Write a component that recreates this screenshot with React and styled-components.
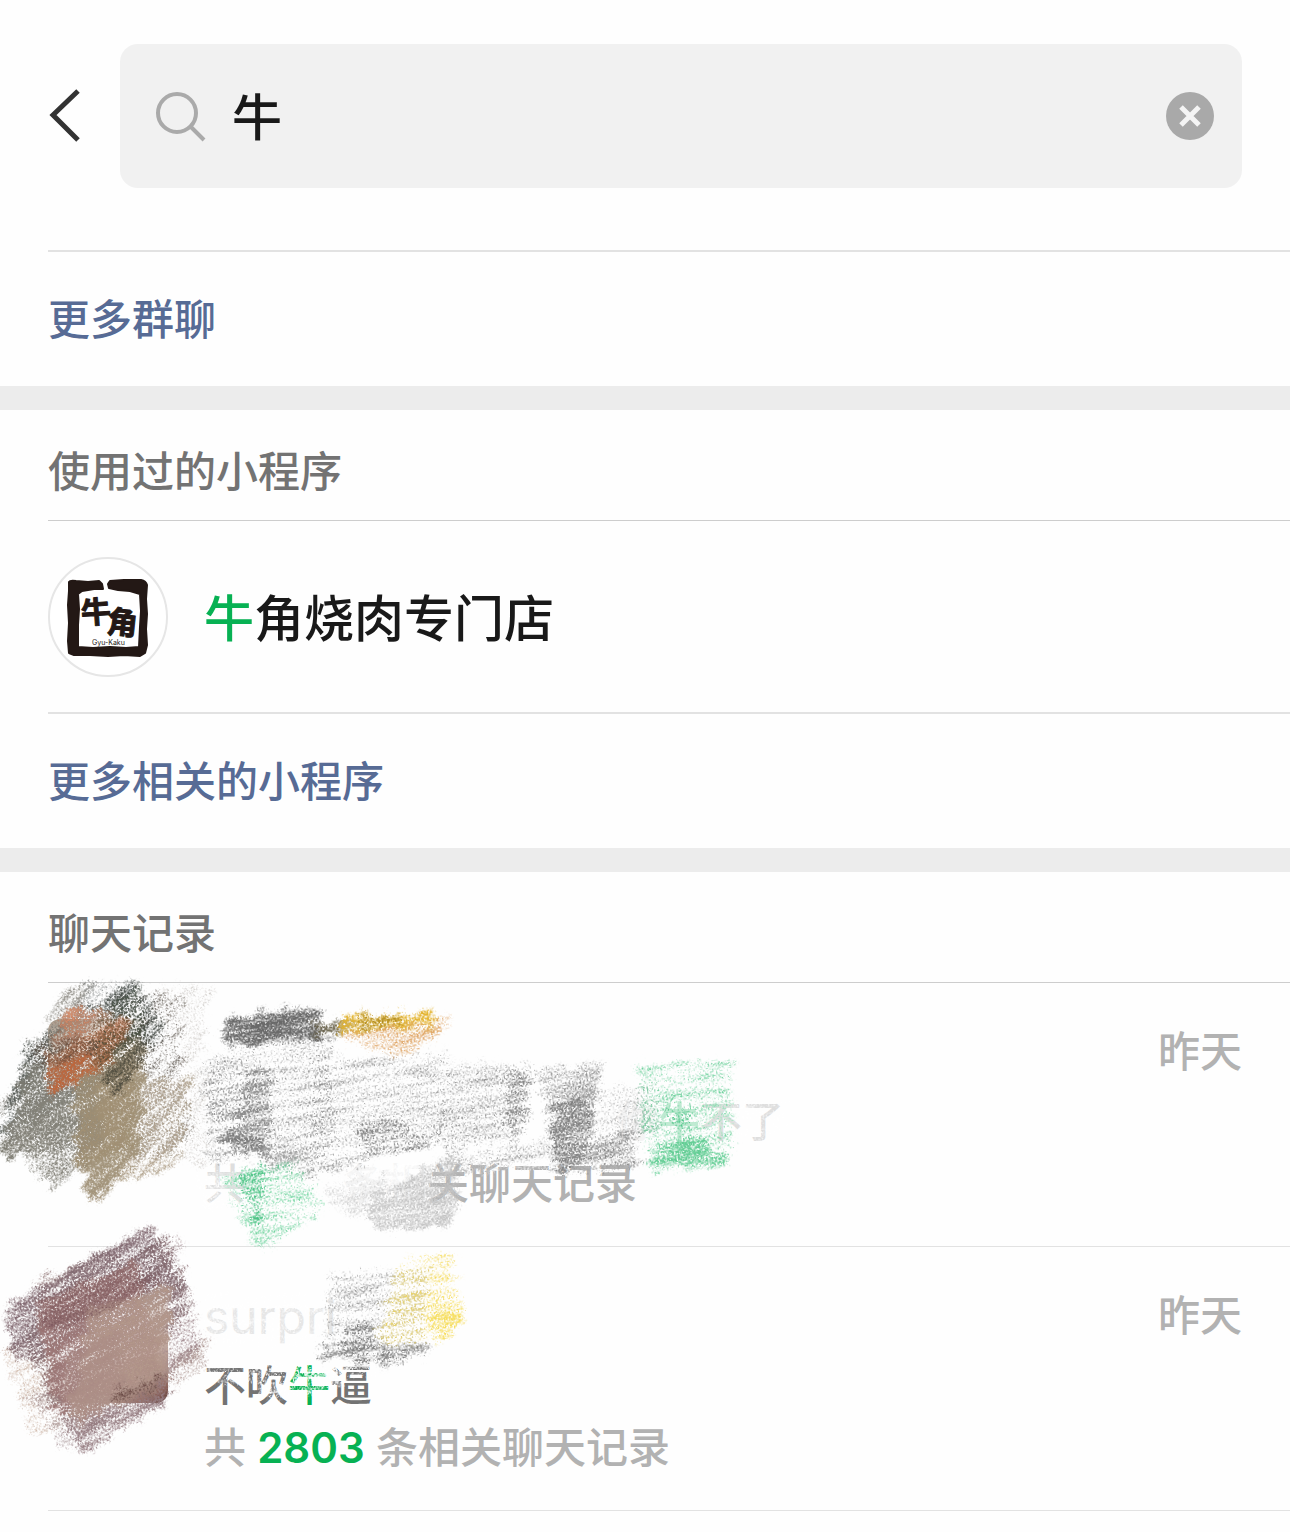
import React from "react"
import styled, { createGlobalStyle } from "styled-components"

const colors = {
  text: "#191919",
  green: "#07b153",
  link: "#576b95",
  label: "#737373",
  muted: "#b2b2b2",
  line: "#e2e2e2",
  darkLine: "#cdcdcd",
  band: "#ececec",
}

const GlobalStyle = createGlobalStyle`
  * {
    box-sizing: border-box;
  }
  body {
    margin: 0;
    background: #fefefe;
    color: ${colors.text};
    font-family: Inter, "Noto Sans CJK SC", sans-serif;
    font-weight: 500;
  }
  button, input {
    font: inherit;
    color: inherit;
    border: 0;
    padding: 0;
    background: none;
  }
`

const Page = styled.div`
  min-height: 100vh;
  overflow: hidden;
`

const Header = styled.header`
  display: flex;
  align-items: center;
  padding: 44px 48px 62px;
`

const BackButton = styled.button`
  display: flex;
  width: 72px;
  svg {
    display: block;
  }
`

const SearchBox = styled.form`
  display: flex;
  align-items: center;
  flex: 1;
  height: 144px;
  padding: 0 28px 0 34px;
  border-radius: 18px;
  background: #f1f1f1;
`

const SearchInput = styled.input`
  flex: 1;
  min-width: 0;
  margin-left: 24px;
  height: 72px;
  padding-bottom: 4px;
  font-size: 50px;
  outline: none;
`

const ClearButton = styled.button`
  display: flex;
`

const Band = styled.div`
  height: 24px;
  background: ${colors.band};
`

const Title = styled.h2`
  margin: 0;
  padding: 31px 48px 17px;
  font-size: 42px;
  line-height: 62px;
  font-weight: 500;
  color: ${colors.label};
`

const Row = styled.div`
  display: flex;
  gap: 36px;
  margin-left: 48px;
  padding: ${p => (p.$chat ? "32px 48px 31px 0" : "36px 48px 35px 0")};
  border-top: 1px solid ${p => (p.$dark ? colors.darkLine : colors.line)};
`

const More = styled.div`
  margin-left: 48px;
  padding: 37px 0 35px;
  border-top: 2px solid ${colors.line};
  a {
    display: block;
    font-size: 42px;
    line-height: 62px;
    color: ${colors.link};
    text-decoration: none;
  }
`

const Logo = styled.div`
  width: 120px;
  height: 120px;
  border: 2px solid #e6e6e6;
  border-radius: 50%;
  background: #fff;
  svg {
    display: block;
    margin: -2px;
  }
`

const AppName = styled.div`
  height: 120px;
  font-size: 50px;
  line-height: 124px;
`

const Mark = styled.span`
  color: ${colors.green};
  font-weight: ${p => (p.$bold ? 600 : 500)};
  opacity: ${p => (p.$faint ? 0.25 : 1)};
`

const Faded = styled.span`
  color: ${p => (p.$more ? "#f4f4f4" : "#dedede")};
`

const ChatList = styled.div`
  position: relative;
`

const Avatar = styled.div`
  width: 120px;
  height: 120px;
  margin-top: 4px;
  border-radius: 12px;
  background: ${p => p.$fill};
`

const ChatText = styled.div`
  flex: 1;
  min-width: 0;
  font-size: 42px;
  line-height: 62px;
  white-space: nowrap;
`

const ChatName = styled.div`
  height: 76px;
  font-size: 48px;
  line-height: 76px;
  font-weight: 400;
  color: #e6e6e6;
`

const Preview = styled.div`
  color: ${colors.label};
`

const Count = styled.div`
  color: ${colors.muted};
`

const Gap = styled.span`
  display: inline-block;
  width: ${p => p.$width}px;
`

const Time = styled.time`
  font-size: 42px;
  line-height: 74px;
  color: ${colors.muted};
`

const Drawing = styled.svg`
  position: absolute;
  top: -22px;
  left: 0;
  pointer-events: none;
`

const LastLine = styled.div`
  margin-left: 48px;
  border-top: 1px solid ${colors.line};
`

// zigzag between two edges, each edge is [x1, y1, x2, y2]
const hatch = (a, b, n) => {
  let d = ""
  for (let i = 0; i <= n; i++) {
    const t = i / n
    const wobble = ((i * 37) % 11) - 5
    const at = e => [e[0] + (e[2] - e[0]) * t, e[1] + (e[3] - e[1]) * t]
    const [ax, ay] = at(a)
    const [bx, by] = at(b)
    d += `${i ? "L" : "M"}${ax + wobble} ${ay}L${bx - wobble} ${by}`
  }
  return d
}

// [edge a, edge b, strokes, colour, density, stroke width]
const firstAvatar = [
  [[162, 990, 165, 1150], [205, 990, 205, 1160], 12, "#c8c6c3", 0.26, 11],
  [[64, 1000, 4, 1112], [84, 984, 70, 1040], 6, "#8f8e86", 0.44, 11],
  [[90, 982, 70, 1040], [130, 990, 150, 1010], 6, "#8b9090", 0.32, 12],
  [[120, 1000, 130, 1160], [174, 1000, 186, 1145], 15, "#6f6b63", 0.32, 12],
  [[120, 1090, 100, 1180], [186, 1080, 176, 1165], 10, "#b3a48e", 0.42, 12],
  [[80, 1090, 92, 1194], [134, 1050, 136, 1150], 10, "#a3947b", 0.76, 16],
  [[32, 1050, 6, 1135], [132, 986, 160, 1035], 13, "#4f5552", 0.48, 13],
  [[35, 1070, 10, 1150], [100, 1050, 90, 1145], 12, "#7d7b72", 0.6, 15],
  [[10, 1130, 48, 1184], [60, 1090, 110, 1140], 8, "#85827a", 0.46, 12],
  [[80, 1080, 80, 1160], [130, 1040, 130, 1140], 9, "#a08f73", 0.6, 14],
  [[110, 1060, 110, 1090], [140, 1020, 145, 1060], 5, "#4d4a3e", 0.42, 12],
  [[52, 1060, 56, 1090], [126, 1018, 110, 1056], 6, "#c2663a", 0.6, 12],
  [[66, 1014, 56, 1045], [105, 1012, 115, 1028], 4, "#d98b69", 0.48, 10],
  [[95, 1030, 95, 1066], [134, 990, 142, 1036], 7, "#46503f", 0.36, 11],
  [[34, 1045, 40, 1064], [85, 1040, 90, 1050], 4, "#5e5048", 0.42, 9],
]

const messages = [
  [[210, 1062, 210, 1158], [330, 1042, 330, 1153], 18, "#8a8a8a", 0.27, 11],
  [[320, 1065, 310, 1170], [438, 1056, 438, 1140], 18, "#929292", 0.26, 11],
  [[210, 1078, 214, 1122], [250, 1072, 250, 1122], 8, "#8d8d8d", 0.3, 11],
  [[254, 1074, 236, 1138], [266, 1077, 268, 1140], 10, "#8a8a8a", 0.48, 12],
  [[226, 1137, 240, 1146], [254, 1142, 272, 1156], 4, "#7c7c7c", 0.6, 10],
  [[230, 1155, 300, 1174], [265, 1150, 370, 1162], 4, "#a0a0a0", 0.34, 9],
  [[362, 1130, 364, 1148], [390, 1120, 434, 1143], 4, "#858585", 0.4, 10],
  [[232, 1021, 230, 1044], [316, 1012, 318, 1032], 6, "#696969", 0.68, 11],
  [[315, 1024, 322, 1031], [350, 1024, 368, 1027], 3, "#6c664f", 0.58, 8],
  [[346, 1020, 350, 1030], [426, 1016, 434, 1024], 4, "#e3b431", 0.66, 10],
  [[362, 1018, 366, 1028], [395, 1018, 392, 1023], 3, "#aa8723", 0.5, 8],
  [[350, 1038, 395, 1052], [440, 1022, 424, 1044], 5, "#e0a868", 0.42, 10],
  [[450, 1070, 442, 1148], [524, 1068, 524, 1128], 13, "#8f8f8f", 0.3, 11],
  [[512, 1076, 510, 1133], [522, 1072, 524, 1128], 8, "#838383", 0.44, 12],
  [[450, 1160, 450, 1174], [540, 1144, 550, 1154], 4, "#969696", 0.32, 10],
  [[542, 1076, 554, 1143], [592, 1068, 592, 1105], 10, "#8c8c8c", 0.4, 11],
  [[558, 1109, 560, 1170], [582, 1105, 586, 1143], 9, "#7d7d7d", 0.54, 13],
  [[572, 1150, 564, 1172], [632, 1134, 632, 1164], 7, "#868686", 0.46, 11],
  [[592, 1095, 602, 1140], [648, 1087, 655, 1130], 7, "#a8a8a8", 0.24, 10],
  [[643, 1069, 652, 1158], [724, 1064, 729, 1156], 16, "#67cf98", 0.29, 11],
  [[668, 1107, 676, 1122], [684, 1107, 688, 1122], 3, "#3fbf7b", 0.42, 8],
  [[656, 1150, 652, 1164], [696, 1144, 728, 1161], 4, "#62ce94", 0.52, 11],
  [[226, 1182, 260, 1244], [288, 1166, 322, 1208], 10, "#67cf98", 0.3, 11],
  [[242, 1172, 254, 1218], [258, 1169, 258, 1210], 8, "#4cc384", 0.46, 11],
  [[376, 1205, 380, 1226], [448, 1160, 454, 1218], 9, "#c4c4c4", 0.56, 13],
  [[330, 1190, 350, 1212], [380, 1178, 390, 1204], 5, "#cccccc", 0.34, 12],
  [[332, 1277, 326, 1348], [423, 1270, 420, 1333], 11, "#8f8f8f", 0.25, 10],
  [[350, 1331, 346, 1348], [366, 1330, 376, 1346], 4, "#777", 0.44, 10],
  [[322, 1350, 324, 1357], [424, 1344, 424, 1352], 3, "#868686", 0.42, 8],
  [[352, 1359, 362, 1363], [403, 1356, 408, 1361], 2, "#777", 0.44, 7],
  [[402, 1265, 380, 1344], [448, 1259, 454, 1332], 13, "#f4dd5c", 0.31, 10],
  [[434, 1304, 436, 1336], [460, 1301, 455, 1332], 5, "#f6dd58", 0.44, 10],
]

const secondAvatar = [
  [[8, 1350, 36, 1428], [55, 1345, 75, 1423], 10, "#cdb8aa", 0.36, 13],
  [[150, 1375, 165, 1386], [202, 1344, 198, 1365], 4, "#ad9691", 0.44, 10],
  [[150, 1252, 160, 1373], [173, 1244, 196, 1348], 13, "#9d878c", 0.38, 11],
  [[34, 1400, 67, 1448], [90, 1380, 120, 1408], 7, "#a99599", 0.38, 11],
  [[62, 1410, 87, 1446], [164, 1374, 156, 1404], 7, "#957c82", 0.52, 12],
  [[40, 1286, 47, 1302], [108, 1256, 120, 1260], 4, "#9a8080", 0.5, 11],
  [[10, 1312, 24, 1358], [145, 1232, 176, 1288], 12, "#846c73", 0.54, 14],
  [[28, 1340, 57, 1398], [162, 1238, 188, 1308], 12, "#856a70", 0.44, 12],
  [[44, 1310, 64, 1408], [130, 1267, 156, 1363], 14, "#9c7776", 0.68, 16],
  [[94, 1317, 80, 1410], [160, 1294, 158, 1383], 12, "#b3988b", 0.62, 16],
  [[70, 1350, 75, 1420], [110, 1340, 120, 1395], 8, "#a98c84", 0.46, 15],
  [[45, 1302, 50, 1330], [130, 1270, 165, 1280], 4, "#7d5a5f", 0.36, 12],
  [[118, 1394, 120, 1398], [158, 1378, 160, 1390], 2, "#6b4a47", 0.44, 10],
]

const erasedText = [
  [[200, 1175, 205, 1205], [425, 1165, 440, 1200], 6, "#fefefe", 0.4, 10],
  [[440, 1163, 440, 1170], [636, 1153, 636, 1164], 2, "#fefefe", 0.36, 9],
  [[205, 1300, 205, 1345], [375, 1290, 375, 1340], 6, "#fefefe", 0.34, 9],
  [[208, 1368, 208, 1380], [370, 1364, 370, 1376], 3, "#fefefe", 0.34, 9],
  [[250, 1374, 270, 1396], [350, 1368, 330, 1388], 4, "#fefefe", 0.38, 10],
  [[625, 1110, 625, 1136], [785, 1100, 785, 1136], 4, "#fefefe", 0.32, 9],
]

// the grain runs along the angle, the strokes themselves stay in place
const Strokes = ({ items, angle }) => (
  <g transform={`rotate(${angle})`}>
    {items.map(([a, b, n, color, density, width], i) => (
      <g key={i} filter="url(#chalk)">
        <path
          transform={`rotate(${-angle})`}
          d={hatch(a, b, n)}
          fill="none"
          stroke={color}
          strokeOpacity={density}
          strokeWidth={width}
          strokeLinejoin="round"
        />
      </g>
    ))}
  </g>
)

const Scribbles = () => (
  <Drawing width="820" height="520" viewBox="0 960 820 520" aria-hidden="true">
    <defs>
      <filter id="chalk" x="-25%" y="-60%" width="150%" height="220%" colorInterpolationFilters="sRGB">
        <feTurbulence type="fractalNoise" baseFrequency="0.08 0.14" numOctaves="3" seed="4" result="rough" />
        <feDisplacementMap in="SourceGraphic" in2="rough" scale="22" xChannelSelector="R" yChannelSelector="G" result="edge" />
        <feGaussianBlur in="edge" stdDeviation="2" result="soft" />
        <feTurbulence type="fractalNoise" baseFrequency="0.55" numOctaves="3" seed="9" />
        <feColorMatrix values="0 0 0 0 0  0 0 0 0 0  0 0 0 0 0  1 0 0 0 0" result="fine" />
        <feTurbulence type="fractalNoise" baseFrequency="0.02 0.13" numOctaves="3" seed="2" />
        <feColorMatrix values="0 0 0 0 0  0 0 0 0 0  0 0 0 0 0  1 0 0 0 0" result="streak" />
        <feComposite in="fine" in2="streak" operator="arithmetic" k1="0" k2="0.8" k3="0.35" k4="-0.08" result="grain" />
        <feComposite in="soft" in2="grain" operator="arithmetic" k1="0" k2="2" k3="3.6" k4="-2.32" result="mask" />
        <feComponentTransfer in="soft" result="solid">
          <feFuncA type="linear" slope="6" />
        </feComponentTransfer>
        <feComposite in="solid" in2="mask" operator="in" />
      </filter>
    </defs>
    <Strokes items={erasedText} angle={-8} />
    <Strokes items={firstAvatar} angle={-42} />
    <Strokes items={secondAvatar} angle={-28} />
    <Strokes items={messages} angle={-8} />
  </Drawing>
)

const GyuKaku = () => (
  <svg width="120" height="120" viewBox="0 0 120 120" role="img" aria-label="Gyu-Kaku">
    <g fill="#231815" stroke="#231815" strokeLinejoin="round">
      <path
        strokeWidth="2"
        d="M21 25Q22 23 28 24L40 25L51 24L54 27L55 32L46 32L34 34L30 37L31 52L30 68L30 90L45 91L62 90L78 91L91 90L92 70L93 54L92 37L82 34L70 33L61 31L60 27L62 24L76 23L93 23Q98 24 99 28L98 42L99 57L98 72L99 88L97 96L92 99L76 98L60 99L42 98L26 98L21 96L20 84L21 66L20 48L21 34Z"
      />
      <text x="33" y="66" fontSize="30" fontWeight="700" strokeWidth="1" transform="rotate(-4 48 56)">
        牛
      </text>
      <text x="59" y="77" fontSize="31" fontWeight="700" strokeWidth="1" transform="rotate(6 75 64)">
        角
      </text>
      <text x="44" y="88" fontSize="7" fontWeight="400" stroke="none">
        Gyu-Kaku
      </text>
    </g>
  </svg>
)

const ChatRow = ({ dark, avatar, name, preview, count }) => (
  <Row $chat $dark={dark}>
    <Avatar $fill={avatar} />
    <ChatText>
      <ChatName>{name}</ChatName>
      <Preview>{preview}</Preview>
      <Count>{count}</Count>
    </ChatText>
    <Time>昨天</Time>
  </Row>
)

const App = () => (
  <Page>
    <GlobalStyle />
    <Header>
      <BackButton type="button" aria-label="返回">
        <svg width="34" height="56" viewBox="0 0 34 56" fill="none" stroke="#333" strokeWidth="5">
          <path d="M30 3L5 27L30 52" />
        </svg>
      </BackButton>
      <SearchBox onSubmit={e => e.preventDefault()}>
        <svg width="54" height="54" viewBox="0 0 54 54" fill="none" stroke="#aaa" strokeWidth="4">
          <circle cx="23" cy="24" r="19" />
          <path d="M36 37L50 51" />
        </svg>
        <SearchInput aria-label="搜索" defaultValue="牛" />
        <ClearButton type="button" aria-label="清除">
          <svg width="48" height="48" viewBox="0 0 48 48">
            <circle cx="24" cy="24" r="24" fill="#a9a9a9" />
            <path d="M15 15L33 33M33 15L15 33" stroke="#f4f4f4" strokeWidth="5" />
          </svg>
        </ClearButton>
      </SearchBox>
    </Header>

    <More>
      <a href="#groups">更多群聊</a>
    </More>
    <Band />

    <Title>使用过的小程序</Title>
    <Row $dark>
      <Logo>
        <GyuKaku />
      </Logo>
      <AppName>
        <Mark>牛</Mark>角烧肉专门店
      </AppName>
    </Row>
    <More>
      <a href="#mini-programs">更多相关的小程序</a>
    </More>
    <Band />

    <Title>聊天记录</Title>
    <ChatList>
      <ChatRow
        dark
        avatar="linear-gradient(145deg, #a59483 0%, #d9cfc4 18%, transparent 40%)"
        preview={
          <>
            <Gap $width={412} />
            <Faded $more>你</Faded>
            <Mark $faint>牛</Mark>
            <Faded>不了</Faded>
          </>
        }
        count={
          <>
            <Faded>共</Faded>
            <Gap $width={97} />
            <Faded $more>条相</Faded>关聊天记录
          </>
        }
      />
      <ChatRow
        avatar="linear-gradient(325deg, #4e2d28 0%, #8b6259 8%, #b3968b 20%, #c9b2a8 32%, transparent 60%)"
        name="surpri"
        preview={
          <>
            不吹<Mark>牛</Mark>逼
          </>
        }
        count={
          <>
            共 <Mark $bold>2803</Mark> 条相关聊天记录
          </>
        }
      />
      <Scribbles />
    </ChatList>
    <LastLine />
  </Page>
)

export default App
